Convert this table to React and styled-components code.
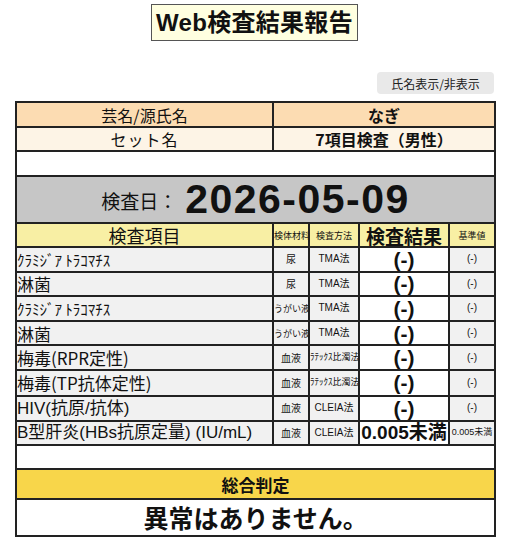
import React from "react";
import styled, { createGlobalStyle } from "styled-components";

const Global = createGlobalStyle`
  html, body { margin: 0; padding: 0; background: #fff; }
  body { font-family: "Noto Sans CJK JP", "Liberation Sans", sans-serif; color: #111; }
`;

const Page = styled.div`
  width: 510px;
  padding: 4px 16px 0 15px;
  box-sizing: border-box;
`;

const TitleRow = styled.div`
  display: flex;
  justify-content: center;
`;

const Title = styled.h1`
  margin: 0;
  padding: 0 4px;
  height: 37px;
  line-height: 36px;
  box-sizing: border-box;
  background: #ffffe0;
  border: 1px solid #555;
  font-size: 24px;
  font-weight: 700;
  font-family: "Liberation Sans", "Noto Sans CJK JP", sans-serif;
  letter-spacing: 0.3px;
`;

const Toolbar = styled.div`
  display: flex;
  justify-content: flex-end;
  margin-top: 31px;
  margin-bottom: 7px;
`;

const ToggleButton = styled.button`
  border: none;
  background: #e9e9e9;
  border-radius: 4px;
  height: 22px;
  width: 117px;
  padding: 0;
  font-family: "Noto Sans CJK JP", sans-serif;
  font-size: 12px;
  color: #222;
`;

const Table = styled.table`
  width: 479px;
  border-collapse: collapse;
  table-layout: fixed;
  border: 2px solid #222;
`;

const Row = styled.tr`
  height: ${(p) => p.$h || 24}px;
  background: ${(p) => p.$bg || "#fff"};
`;

const Cell = styled.td`
  border: 2px solid #222;
  padding: 0;
  text-align: ${(p) => p.$align || "center"};
  font-size: ${(p) => p.$size || 16}px;
  font-weight: ${(p) => (p.$bold ? 700 : 400)};
  background: ${(p) => p.$bg || "transparent"};
  white-space: nowrap;
  overflow: ${(p) => (p.$clip ? "hidden" : "visible")};
  line-height: 1;
  letter-spacing: ${(p) => p.$ls || 0}px;
  font-family: ${(p) =>
    p.$latin
      ? `"Liberation Sans", "Noto Sans CJK JP", sans-serif`
      : `"Noto Sans CJK JP", "Liberation Sans", sans-serif`};
`;

const DateLabel = styled.span`
  font-size: 19px;
  font-weight: 400;
  margin-right: 8px;
  vertical-align: 4px;
`;

const DateValue = styled.span`
  font-family: "Liberation Sans", sans-serif;
  font-size: 41px;
  font-weight: 700;
  letter-spacing: 1.5px;
`;

const rows = [
  { name: "ｸﾗﾐｼﾞｱ ﾄﾗｺﾏﾁｽ", mat: "尿", method: "TMA法", res: "(-)", ref: "(-)" },
  { name: "淋菌", mat: "尿", method: "TMA法", res: "(-)", ref: "(-)" },
  { name: "ｸﾗﾐｼﾞｱ ﾄﾗｺﾏﾁｽ", mat: "うがい液", method: "TMA法", res: "(-)", ref: "(-)" },
  { name: "淋菌", mat: "うがい液", method: "TMA法", res: "(-)", ref: "(-)" },
  { name: "梅毒(RPR定性)", mat: "血液", method: "ﾗﾃｯｸｽ比濁法", res: "(-)", ref: "(-)" },
  { name: "梅毒(TP抗体定性)", mat: "血液", method: "ﾗﾃｯｸｽ比濁法", res: "(-)", ref: "(-)" },
  { name: "HIV(抗原/抗体)", mat: "血液", method: "CLEIA法", res: "(-)", ref: "(-)" },
  { name: "B型肝炎(HBs抗原定量) (IU/mL)", mat: "血液", method: "CLEIA法", res: "0.005未満", ref: "0.005未満" },
];

export default function App() {
  return (
    <>
      <Global />
      <Page>
        <TitleRow>
          <Title>Web検査結果報告</Title>
        </TitleRow>
        <Toolbar>
          <ToggleButton>氏名表示/非表示</ToggleButton>
        </Toolbar>
        <Table>
          <colgroup>
            <col style={{ width: 257 }} />
            <col style={{ width: 36 }} />
            <col style={{ width: 50 }} />
            <col style={{ width: 90 }} />
            <col style={{ width: 46 }} />
          </colgroup>
          <tbody>
            <Row $h={25} $bg="#fcdcb2">
              <Cell>芸名/源氏名</Cell>
              <Cell colSpan={4} $bold>なぎ</Cell>
            </Row>
            <Row $h={24} $bg="#fdf4e6">
              <Cell $ls={1}>セット名</Cell>
              <Cell colSpan={4} $bold>7項目検査（男性）</Cell>
            </Row>
            <Row $h={25}>
              <Cell colSpan={5} />
            </Row>
            <Row $h={47} $bg="#c6c6c6">
              <Cell colSpan={5}>
                <DateLabel>検査日：</DateLabel>
                <DateValue>2026-05-09</DateValue>
              </Cell>
            </Row>
            <Row $h={24} $bg="#f8efa4">
              <Cell $size={18}>検査項目</Cell>
              <Cell $size={9} $clip>検体材料</Cell>
              <Cell $size={9}>検査方法</Cell>
              <Cell $size={19} $bold>検査結果</Cell>
              <Cell $size={9}>基準値</Cell>
            </Row>
            {rows.map((r, i) => (
              <Row key={i} $h={i === 5 ? 26 : 24.6} $bg="#f1f1f1">
                <Cell $clip $align="left" $size={r.name.startsWith("ｸ") ? 15 : 17} $latin={r.name.startsWith("H") || r.name.startsWith("B")}>
                  {r.name}
                </Cell>
                <Cell $clip $size={r.mat.length > 2 ? 9 : 10}>{r.mat}</Cell>
                <Cell $clip $size={r.method.startsWith("ﾗ") ? 9 : 10} $latin>{r.method}</Cell>
                <Cell $size={r.res === "(-)" ? 21 : 19} $bold $bg="#fff" $latin>
                  {r.res}
                </Cell>
                <Cell $clip $size={r.ref === "(-)" ? 10 : 9} $latin>{r.ref}</Cell>
              </Row>
            ))}
            <Row $h={24}>
              <Cell colSpan={5} />
            </Row>
            <Row $h={30} $bg="#f8d64a">
              <Cell colSpan={5} $size={17} $bold>総合判定</Cell>
            </Row>
            <Row $h={37}>
              <Cell colSpan={5} $size={25} $bold>異常はありません。</Cell>
            </Row>
          </tbody>
        </Table>
      </Page>
    </>
  );
}
